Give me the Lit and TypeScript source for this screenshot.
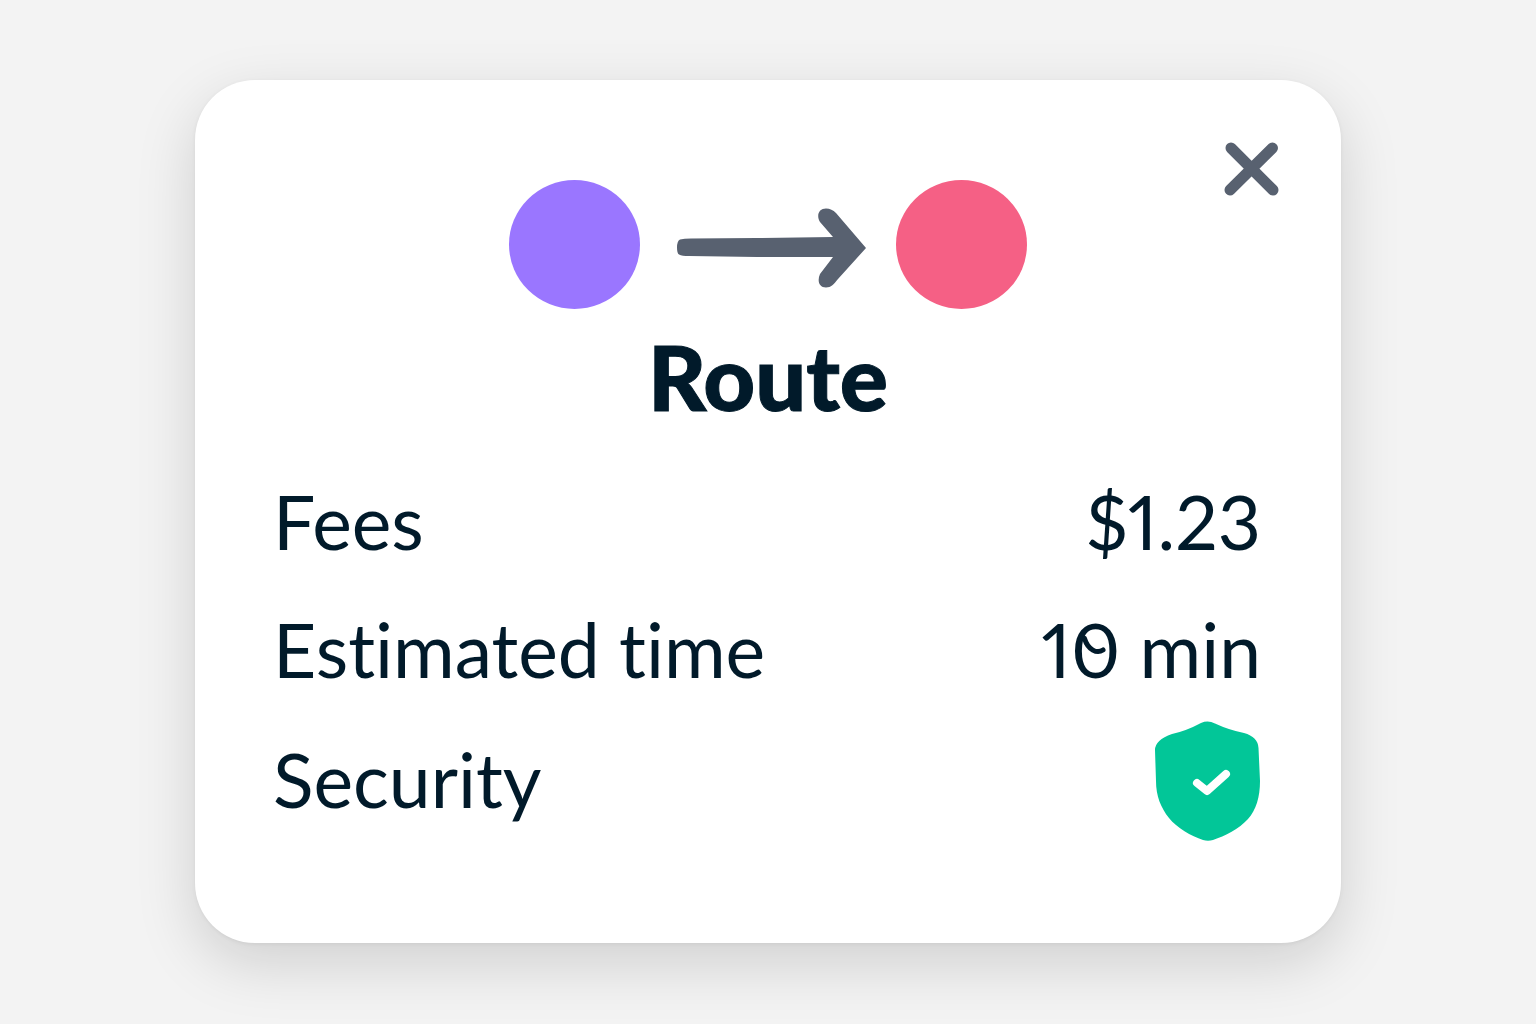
import { LitElement, html, css } from "lit";
import { customElement } from "lit/decorators.js";

@customElement("app-root")
export class AppRoot extends LitElement {
  static styles = css`
    :host {
      display: block;
      font-family: Lato, "Liberation Sans", sans-serif;
      font-variant-ligatures: none;
      font-variant-numeric: proportional-nums;
      color: #011a2a;
    }
    .page {
      box-sizing: border-box;
      min-height: 100vh;
      padding: 80px 24px;
      display: flex;
      justify-content: center;
      align-items: flex-start;
      background: #f3f3f3;
    }
    .card {
      box-sizing: border-box;
      width: 100%;
      max-width: 1146px;
      padding: 62px 62px 96px;
      border-radius: 60px;
      background: #ffffff;
      box-shadow: 0 20px 60px rgba(0, 0, 0, 0.15), 0 1px 4px rgba(0, 0, 0, 0.06);
    }
    .top {
      display: grid;
      grid-template-columns: 1fr auto 1fr;
      align-items: start;
    }
    .diagram {
      grid-column: 2;
      display: flex;
      align-items: center;
      padding-top: 38px;
      gap: 30px;
    }
    .token {
      width: 131px;
      height: 129px;
      border-radius: 50%;
    }
    .from {
      background: #9a76ff;
    }
    .to {
      background: #f56085;
    }
    .close {
      justify-self: end;
      display: block;
      padding: 0;
      border: 0;
      background: none;
      cursor: pointer;
    }
    svg {
      display: block;
    }
    .title {
      margin: 0;
      padding-bottom: 16px;
      font-size: 90px;
      line-height: 134px;
      font-weight: 900;
      text-align: center;
      -webkit-text-stroke: 1px currentColor;
    }
    .details {
      margin: 0;
      padding: 0 18px 0 16px;
    }
    .row {
      display: flex;
      justify-content: space-between;
      align-items: center;
      min-height: 128px;
      font-size: 75px;
      line-height: 96px;
    }
    .row:last-child {
      min-height: 132px;
    }
    .label,
    .text {
      padding-bottom: 4px;
    }
    .value {
      margin: 0;
    }
    .zero {
      position: relative;
    }
    .mark {
      position: absolute;
      left: 22%;
      top: 36%;
    }
  `;

  render() {
    return html`
      <main class="page">
        <section class="card" aria-labelledby="title">
          <div class="top">
            <div class="diagram">
              <span class="token from"></span>
              <svg width="196" height="86" viewBox="-7 -6 196 86" fill="#586170" aria-hidden="true">
                <path d="M0 39.500Q0 33 3 31.500Q7 30.500 14 30.500L80 30L156 29L143 14C139 7 142 0.500 149 0.500C153 0.500 156 2 159 5L189 40L161 71C157 76 154 79.500 149 79.500C142 79.500 140 73 143 66L156 49L80 49L12 48Q5 48 2 46.500Q0 45.500 0 39.500Z" />
              </svg>
              <span class="token to"></span>
            </div>
            <button class="close" type="button" aria-label="Close">
              <svg width="55" height="54" viewBox="0 0 55 54" fill="none" stroke="#586170" stroke-width="11" stroke-linecap="round" aria-hidden="true">
                <path d="M7 6L49 48M48.500 6L6 48" />
              </svg>
            </button>
          </div>
          <h1 class="title" id="title">Route</h1>
          <dl class="details">
            <div class="row">
              <dt class="label">Fees</dt>
              <dd class="value text">$1.23</dd>
            </div>
            <div class="row">
              <dt class="label">Estimated time</dt>
              <dd class="value text">1<span class="zero">0<svg class="mark" width="24" height="20" viewBox="0 0 24 20" fill="none" stroke="#011a2a" stroke-width="5" stroke-linecap="round" aria-hidden="true"><path d="M2.500 2.500C6 14 15 18 21 14" /></svg></span> min</dd>
            </div>
            <div class="row">
              <dt class="label">Security</dt>
              <dd class="value">
                <svg width="106" height="120" viewBox="0 0 106 120" role="img" aria-label="Secure">
                  <path fill="#02c698" d="M46 2Q53 -1 60 2.500Q74 9 89 12Q103 16 103.500 27L105 60C105 76 101 89 93 98C84 108 70 115 58 119Q53 120.500 48 119C36 115 22 107 14 97C6 87 1 75 1 60L0 29Q0 19 17 13Q31 10 46 2Z" />
                  <path fill="none" stroke="#ffffff" stroke-width="8" stroke-linecap="round" stroke-linejoin="round" d="M42 62L52 70L71 53" />
                </svg>
              </dd>
            </div>
          </dl>
        </section>
      </main>
    `;
  }
}
